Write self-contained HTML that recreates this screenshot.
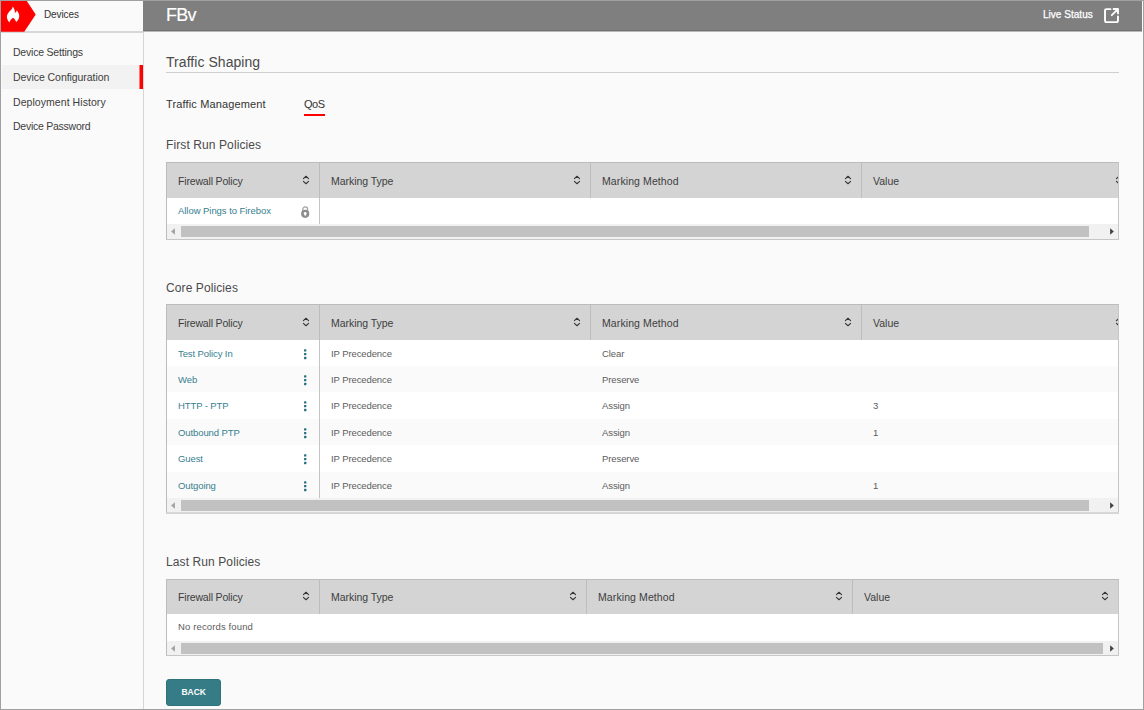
<!DOCTYPE html>
<html><head><meta charset="utf-8"><title>FBv - Traffic Shaping</title>
<style>
*{box-sizing:border-box;margin:0;padding:0}
html,body{width:1144px;height:710px;overflow:hidden;background:#fafafa;font-family:"Liberation Sans",sans-serif;color:#333}
#frame{position:absolute;left:0;top:0;width:1144px;height:710px;border:1px solid #a0a0a0;pointer-events:none;z-index:50}
.abs{position:absolute;white-space:nowrap}
#side{position:absolute;left:1px;top:1px;width:143px;height:708px;background:#fafafa;border-right:1px solid #d6d6d6;z-index:2}
#sidehead{position:absolute;left:0;top:0;width:142px;height:33px;background:#fafafa}
#sidehead:after{content:"";position:absolute;left:0;top:30px;width:142px;height:2px;background:#d7d7d7}
#topbar{position:absolute;left:143px;top:1px;width:999px;height:31px;background:#7f7f7f;z-index:3}
#topbar:after{content:"";position:absolute;left:0;top:29px;width:999px;height:1px;background:#707070;border-bottom:1px solid #b8b8b8}
.nav{position:absolute;left:0;width:142px;height:24px;line-height:24px;padding-left:12px;font-size:10.5px;color:#3d3d3d;letter-spacing:-.2px}
.nav.sel{background:#f2f2f2;left:1px;width:141px;padding-left:11px}
.nav.sel:after{content:"";position:absolute;right:0;top:0;width:4px;height:24px;background:linear-gradient(to right,#f97979 0,#f97979 1px,#f00 1px,#f00 100%)}
.tbl{position:absolute;left:166px;width:953px;border:1px solid #bcbcbc;border-right-color:#c6c6c6;border-bottom-color:#c6c6c6;background:#fff;overflow:hidden}
.th{position:absolute;top:0;height:35px;background:#d4d4d4;border-right:1px solid #bdbdbd;font-size:10.5px;line-height:37px;padding-left:11px;color:#3d3d3d;letter-spacing:-.25px}
.sort{position:absolute;top:12px;width:8px;height:10px}
.row{position:absolute;left:0;width:951px;height:26px}
.row.alt{background:#fafafa}
.c{position:absolute;top:0;font-size:9.5px;color:#5c5c5c;white-space:nowrap;letter-spacing:-.1px}
.c.l{color:#37808f}
.sb{position:absolute;left:0;width:951px;height:14px;background:#f1f1f1}
.sb .thumb{position:absolute;left:14px;top:2px;height:11px;background:#c1c1c1}
.h3{position:absolute;left:166px;font-size:12px;color:#4a4a4a;white-space:nowrap;letter-spacing:.1px;line-height:16px}
</style></head><body>
<div id="side">
  <div id="sidehead">
    <svg class="abs" style="left:0;top:0;z-index:2" width="36" height="31" viewBox="0 0 36 31"><polygon points="0,0 25.800,0 34.700,13.400 23.300,30.700 0,30.700" fill="#f00"/><path d="M11.600 5.600C11.800 8.400 8.600 10 7 12.400 5.500 14.500 5.300 17.500 8.300 21.400 9.200 19.600 10.200 17.800 12 16.800 13.500 17.800 14.400 19.200 15.200 21 17.900 18.700 18.800 16 18 13.200 17.600 11.700 16.800 10.400 15.800 9.200 15.600 10.600 15 11.400 13.900 11.700 14 9.300 13.100 7.100 11.600 5.600z" fill="#fff"/></svg>
    <div class="abs" style="left:43px;top:0;line-height:28px;font-size:10px;color:#333;letter-spacing:-.1px">Devices</div>
  </div>
  <div class="nav" style="top:39px;letter-spacing:-.21px">Device Settings</div>
  <div class="nav sel" style="top:64px;letter-spacing:-.06px">Device Configuration</div>
  <div class="nav" style="top:89px;letter-spacing:.06px">Deployment History</div>
  <div class="nav" style="top:113px;letter-spacing:-.25px">Device Password</div>
</div>
<div id="topbar">
  <div class="abs" style="left:23px;top:0;line-height:28px;font-size:18px;color:#fff;letter-spacing:-.7px;-webkit-text-stroke:.15px #fff">FBv</div>
  <div class="abs" style="left:900px;top:0;line-height:27px;font-size:10px;color:#fff;letter-spacing:.03px;-webkit-text-stroke:.25px #fff">Live Status</div>
  <svg class="abs" style="left:960.300px;top:5.500px" width="17" height="17" viewBox="0 0 16 16" fill="none" stroke="#fff" stroke-width="1.800" stroke-linecap="round" stroke-linejoin="round"><path d="M7 2H3.400C2.400 2 1.900 2.500 1.900 3.500v9.200c0 1 .5 1.500 1.500 1.500h9.200c1 0 1.500-.5 1.500-1.500V9"/><path d="M8.300 7.700L14 2M10 1.900h4.100V6"/></svg>
</div>

<div class="abs" style="left:166px;top:52px;font-size:14px;line-height:20px;color:#4a4a4a;letter-spacing:.05px">Traffic Shaping</div>
<div class="abs" style="left:166px;top:72px;width:953px;height:1px;background:#cfcfcf"></div>
<div class="abs" style="left:166px;top:96px;font-size:11px;line-height:16px;color:#333;letter-spacing:.14px">Traffic Management</div>
<div class="abs" style="left:304px;top:96px;font-size:11px;line-height:16px;color:#333;letter-spacing:-.5px">QoS</div>
<div class="abs" style="left:304px;top:114px;width:21px;height:2px;background:#f00"></div>

<div class="h3" style="top:137px">First Run Policies</div>
<div class="tbl" id="t1" style="top:162px;height:78px">
  <div class="th" style="left:0px;width:153px;letter-spacing:-.17px">Firewall Policy<svg class="sort" style="left:135px" viewBox="0 0 8 10" fill="none" stroke="#333" stroke-width="1.050" stroke-linecap="round" stroke-linejoin="round"><path d="M1.400 3.700L4 1.250 6.600 3.700M1.400 6.300L4 8.750 6.600 6.300"/></svg></div>
  <div class="th" style="left:153px;width:271px;letter-spacing:-.05px">Marking Type<svg class="sort" style="left:253px" viewBox="0 0 8 10" fill="none" stroke="#333" stroke-width="1.050" stroke-linecap="round" stroke-linejoin="round"><path d="M1.400 3.700L4 1.250 6.600 3.700M1.400 6.300L4 8.750 6.600 6.300"/></svg></div>
  <div class="th" style="left:424px;width:271px;letter-spacing:.1px">Marking Method<svg class="sort" style="left:253px" viewBox="0 0 8 10" fill="none" stroke="#333" stroke-width="1.050" stroke-linecap="round" stroke-linejoin="round"><path d="M1.400 3.700L4 1.250 6.600 3.700M1.400 6.300L4 8.750 6.600 6.300"/></svg></div>
  <div class="th" style="left:695px;width:271px;letter-spacing:0">Value<svg class="sort" style="left:253px" viewBox="0 0 8 10" fill="none" stroke="#333" stroke-width="1.050" stroke-linecap="round" stroke-linejoin="round"><path d="M1.400 3.700L4 1.250 6.600 3.700M1.400 6.300L4 8.750 6.600 6.300"/></svg></div>
  <div class="row" style="top:35px;height:26px;line-height:26px"><div class="c l" style="left:11px;letter-spacing:-.05px">Allow Pings to Firebox</div><svg class="abs" style="left:133px;top:7px" width="11" height="14" viewBox="0 0 11 14"><path d="M2.800 7V4.300a2.400 2.400 0 0 1 4.800 0V7" fill="none" stroke="#a4a4a4" stroke-width="1.300"/><circle cx="5.200" cy="8.800" r="4.100" fill="#8c8c8c"/><path d="M5.200 6.900a1.500 1.500 0 0 1 1.100 2.500L5.200 11.200 4.100 9.400A1.500 1.500 0 0 1 5.200 6.900z" fill="#fff"/></svg></div>
  <div class="abs" style="left:152px;top:35px;width:1px;height:27px;background:#c4c4c4"></div>
  <div class="sb" style="top:61px;height:15px"><div class="thumb" style="top:2px;width:908px"></div><svg class="abs" style="left:4.400px;top:4px" width="4" height="7" viewBox="0 0 4 7"><path d="M3.850 0.250L0.150 3.500 3.850 6.750z" fill="#a0a0a0"/></svg><svg class="abs" style="left:942.750px;top:4px" width="4" height="7" viewBox="0 0 4 7"><path d="M0.150 0.250L3.850 3.500 0.150 6.750z" fill="#404040"/></svg></div>
</div>

<div class="h3" style="top:280px">Core Policies</div>
<div class="tbl" id="t2" style="top:304px;height:209px;border-bottom-color:#d8d8d8;box-shadow:0 1px 0 #d4d4d4">
  <div class="th" style="left:0px;width:153px;letter-spacing:-.17px">Firewall Policy<svg class="sort" style="left:135px" viewBox="0 0 8 10" fill="none" stroke="#333" stroke-width="1.050" stroke-linecap="round" stroke-linejoin="round"><path d="M1.400 3.700L4 1.250 6.600 3.700M1.400 6.300L4 8.750 6.600 6.300"/></svg></div>
  <div class="th" style="left:153px;width:271px;letter-spacing:-.05px">Marking Type<svg class="sort" style="left:253px" viewBox="0 0 8 10" fill="none" stroke="#333" stroke-width="1.050" stroke-linecap="round" stroke-linejoin="round"><path d="M1.400 3.700L4 1.250 6.600 3.700M1.400 6.300L4 8.750 6.600 6.300"/></svg></div>
  <div class="th" style="left:424px;width:271px;letter-spacing:.1px">Marking Method<svg class="sort" style="left:253px" viewBox="0 0 8 10" fill="none" stroke="#333" stroke-width="1.050" stroke-linecap="round" stroke-linejoin="round"><path d="M1.400 3.700L4 1.250 6.600 3.700M1.400 6.300L4 8.750 6.600 6.300"/></svg></div>
  <div class="th" style="left:695px;width:271px;letter-spacing:0">Value<svg class="sort" style="left:253px" viewBox="0 0 8 10" fill="none" stroke="#333" stroke-width="1.050" stroke-linecap="round" stroke-linejoin="round"><path d="M1.400 3.700L4 1.250 6.600 3.700M1.400 6.300L4 8.750 6.600 6.300"/></svg></div>
  <div class="row" style="top:35px;height:26px;line-height:27px"><div class="c l" style="left:11px">Test Policy In</div><svg class="abs" style="left:136px;top:9px" width="4" height="11" viewBox="0 0 4 11" fill="#266f7f"><rect x="1.050" y="0.250" width="2.300" height="2.300" rx=".4"/><rect x="1.050" y="3.950" width="2.300" height="2.300" rx=".4"/><rect x="1.050" y="7.850" width="2.300" height="2.300" rx=".4"/></svg><div class="c" style="left:164px">IP Precedence</div><div class="c" style="left:435px">Clear</div><div class="c" style="left:706px"></div></div>
  <div class="row alt" style="top:61px;height:26px;line-height:27px"><div class="c l" style="left:11px">Web</div><svg class="abs" style="left:136px;top:9px" width="4" height="11" viewBox="0 0 4 11" fill="#266f7f"><rect x="1.050" y="0.250" width="2.300" height="2.300" rx=".4"/><rect x="1.050" y="3.950" width="2.300" height="2.300" rx=".4"/><rect x="1.050" y="7.850" width="2.300" height="2.300" rx=".4"/></svg><div class="c" style="left:164px">IP Precedence</div><div class="c" style="left:435px">Preserve</div><div class="c" style="left:706px"></div></div>
  <div class="row" style="top:87px;height:27px;line-height:27px"><div class="c l" style="left:11px">HTTP - PTP</div><svg class="abs" style="left:136px;top:9px" width="4" height="11" viewBox="0 0 4 11" fill="#266f7f"><rect x="1.050" y="0.250" width="2.300" height="2.300" rx=".4"/><rect x="1.050" y="3.950" width="2.300" height="2.300" rx=".4"/><rect x="1.050" y="7.850" width="2.300" height="2.300" rx=".4"/></svg><div class="c" style="left:164px">IP Precedence</div><div class="c" style="left:435px">Assign</div><div class="c" style="left:706px">3</div></div>
  <div class="row alt" style="top:114px;height:26px;line-height:27px"><div class="c l" style="left:11px">Outbound PTP</div><svg class="abs" style="left:136px;top:9px" width="4" height="11" viewBox="0 0 4 11" fill="#266f7f"><rect x="1.050" y="0.250" width="2.300" height="2.300" rx=".4"/><rect x="1.050" y="3.950" width="2.300" height="2.300" rx=".4"/><rect x="1.050" y="7.850" width="2.300" height="2.300" rx=".4"/></svg><div class="c" style="left:164px">IP Precedence</div><div class="c" style="left:435px">Assign</div><div class="c" style="left:706px">1</div></div>
  <div class="row" style="top:140px;height:27px;line-height:27px"><div class="c l" style="left:11px">Guest</div><svg class="abs" style="left:136px;top:9px" width="4" height="11" viewBox="0 0 4 11" fill="#266f7f"><rect x="1.050" y="0.250" width="2.300" height="2.300" rx=".4"/><rect x="1.050" y="3.950" width="2.300" height="2.300" rx=".4"/><rect x="1.050" y="7.850" width="2.300" height="2.300" rx=".4"/></svg><div class="c" style="left:164px">IP Precedence</div><div class="c" style="left:435px">Preserve</div><div class="c" style="left:706px"></div></div>
  <div class="row alt" style="top:167px;height:26px;line-height:27px"><div class="c l" style="left:11px">Outgoing</div><svg class="abs" style="left:136px;top:9px" width="4" height="11" viewBox="0 0 4 11" fill="#266f7f"><rect x="1.050" y="0.250" width="2.300" height="2.300" rx=".4"/><rect x="1.050" y="3.950" width="2.300" height="2.300" rx=".4"/><rect x="1.050" y="7.850" width="2.300" height="2.300" rx=".4"/></svg><div class="c" style="left:164px">IP Precedence</div><div class="c" style="left:435px">Assign</div><div class="c" style="left:706px">1</div></div>
  <div class="abs" style="left:152px;top:35px;width:1px;height:158px;background:#c4c4c4"></div>
  <div class="sb" style="top:193px"><div class="thumb" style="width:908px"></div><svg class="abs" style="left:4.400px;top:4px" width="4" height="7" viewBox="0 0 4 7"><path d="M3.850 0.250L0.150 3.500 3.850 6.750z" fill="#a0a0a0"/></svg><svg class="abs" style="left:942.750px;top:4px" width="4" height="7" viewBox="0 0 4 7"><path d="M0.150 0.250L3.850 3.500 0.150 6.750z" fill="#404040"/></svg></div>
</div>

<div class="h3" style="top:554px">Last Run Policies</div>
<div class="tbl" id="t3" style="top:579px;height:77px">
  <div class="th" style="height:34px;line-height:35px;left:0px;width:153px;letter-spacing:-.17px">Firewall Policy<svg class="sort" style="top:11px;left:135px" viewBox="0 0 8 10" fill="none" stroke="#333" stroke-width="1.050" stroke-linecap="round" stroke-linejoin="round"><path d="M1.400 3.700L4 1.250 6.600 3.700M1.400 6.300L4 8.750 6.600 6.300"/></svg></div>
  <div class="th" style="height:34px;line-height:35px;left:153px;width:267px;letter-spacing:-.05px">Marking Type<svg class="sort" style="top:11px;left:249px" viewBox="0 0 8 10" fill="none" stroke="#333" stroke-width="1.050" stroke-linecap="round" stroke-linejoin="round"><path d="M1.400 3.700L4 1.250 6.600 3.700M1.400 6.300L4 8.750 6.600 6.300"/></svg></div>
  <div class="th" style="height:34px;line-height:35px;left:420px;width:266px;letter-spacing:.1px">Marking Method<svg class="sort" style="top:11px;left:248px" viewBox="0 0 8 10" fill="none" stroke="#333" stroke-width="1.050" stroke-linecap="round" stroke-linejoin="round"><path d="M1.400 3.700L4 1.250 6.600 3.700M1.400 6.300L4 8.750 6.600 6.300"/></svg></div>
  <div class="th" style="height:34px;line-height:35px;left:686px;width:266px;letter-spacing:0;border-right:0">Value<svg class="sort" style="top:11px;left:248px" viewBox="0 0 8 10" fill="none" stroke="#333" stroke-width="1.050" stroke-linecap="round" stroke-linejoin="round"><path d="M1.400 3.700L4 1.250 6.600 3.700M1.400 6.300L4 8.750 6.600 6.300"/></svg></div>
  <div class="row" style="top:34px;height:27px;line-height:25px"><div class="c" style="left:11px;letter-spacing:.13px">No records found</div></div>
  <div class="sb" style="top:61px"><div class="thumb" style="width:922px"></div><svg class="abs" style="left:4.400px;top:4px" width="4" height="7" viewBox="0 0 4 7"><path d="M3.850 0.250L0.150 3.500 3.850 6.750z" fill="#a0a0a0"/></svg><svg class="abs" style="left:942.750px;top:4px" width="4" height="7" viewBox="0 0 4 7"><path d="M0.150 0.250L3.850 3.500 0.150 6.750z" fill="#404040"/></svg></div>
</div>

<div class="abs" style="left:166px;top:679px;width:55px;height:27px;background:#367c87;border:1px solid #2f727d;border-radius:3px;color:#fff;font-size:9.500px;font-weight:bold;line-height:24px;text-align:center"><span style="display:inline-block;transform:scaleX(.89)">BACK</span></div>
<div id="frame"></div>
</body></html>
